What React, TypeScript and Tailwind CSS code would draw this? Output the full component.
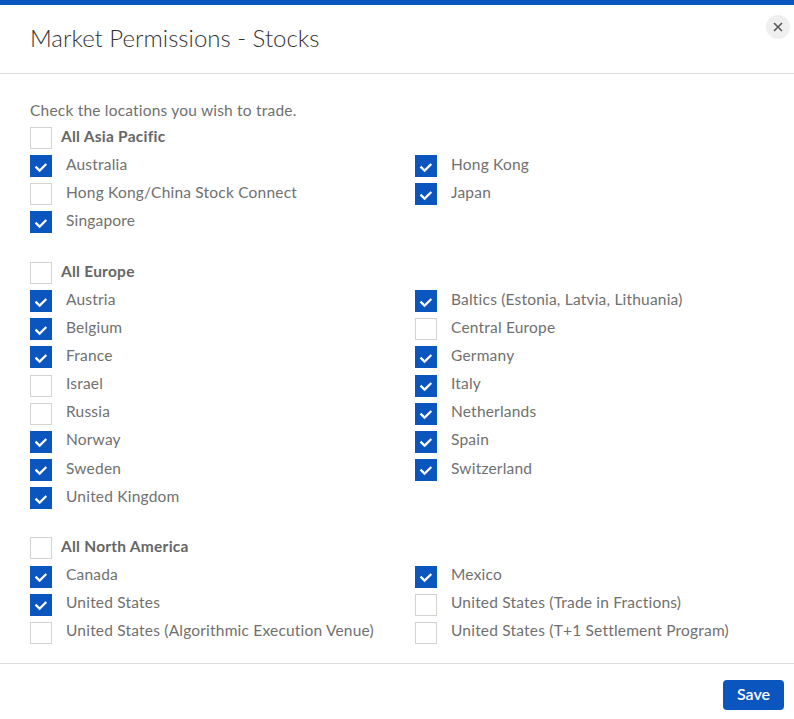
import React from "react";

type Item = [string, boolean];

function Box({ on }: { on: boolean }) {
  return on ? (
    <span className="flex h-[22px] w-[22px] shrink-0 items-center justify-center bg-[#0b55bf]">
      <svg width="14" height="11" viewBox="0 0 14 11" fill="none" className="mt-[2px]">
        <path d="M1.5 4.6 L5.6 8.6 L12.3 2" stroke="#fff" strokeWidth="2.2" />
      </svg>
    </span>
  ) : (
    <span className="h-[22px] w-[22px] shrink-0 border border-[#d6d3ce] bg-white" />
  );
}

function Row({ item }: { item: Item }) {
  return (
    <div className="flex h-[28.125px] items-center">
      <Box on={item[1]} />
      <span className="ml-[14px] pb-[3.5px] text-[15.5px] tracking-[0.2px] text-[#707070]">{item[0]}</span>
    </div>
  );
}

function Group({ title, items, className }: { title: string; items: Item[]; className: string }) {
  return (
    <div className={className}>
      <div className="flex h-[28.125px] items-center">
        <Box on={false} />
        <span className="ml-[9px] pb-[3.5px] text-[15.5px] font-bold tracking-[0.25px] text-[#666666]">{title}</span>
      </div>
      <div className="grid grid-cols-[385px_1fr]">
        {items.map((it) => (
          <Row key={it[0]} item={it} />
        ))}
      </div>
    </div>
  );
}

const asia: Item[] = [
  ["Australia", true],
  ["Hong Kong", true],
  ["Hong Kong/China Stock Connect", false],
  ["Japan", true],
  ["Singapore", true],
];
const europe: Item[] = [
  ["Austria", true],
  ["Baltics (Estonia, Latvia, Lithuania)", true],
  ["Belgium", true],
  ["Central Europe", false],
  ["France", true],
  ["Germany", true],
  ["Israel", false],
  ["Italy", true],
  ["Russia", false],
  ["Netherlands", true],
  ["Norway", true],
  ["Spain", true],
  ["Sweden", true],
  ["Switzerland", true],
  ["United Kingdom", true],
];
const na: Item[] = [
  ["Canada", true],
  ["Mexico", true],
  ["United States", true],
  ["United States (Trade in Fractions)", false],
  ["United States (Algorithmic Execution Venue)", false],
  ["United States (T+1 Settlement Program)", false],
];

export default function App() {
  return (
    <div className="relative flex h-[719px] w-[794px] flex-col overflow-hidden bg-white font-['Lato','Liberation_Sans',sans-serif]">
      <div className="h-[5px] shrink-0 bg-[#0b55bf]" />
      <header className="flex h-[69px] shrink-0 items-center border-b border-[#dcdcdc] pb-[2px] pl-[30px]">
        <h1 className="text-[24px] font-light text-[#333333]">Market Permissions - Stocks</h1>
      </header>
      <button className="absolute right-[4px] top-[15px] flex h-6 w-6 items-center justify-center rounded-full bg-[#efefef]">
        <svg width="10" height="10" viewBox="0 0 10 10" fill="none">
          <path d="M1 1 L9 9 M9 1 L1 9" stroke="#555" strokeWidth="1.6" />
        </svg>
      </button>
      <main className="min-h-0 flex-1 px-[30px] pt-[26px]">
        <p className="mb-[3px] h-[21px] text-[15.5px] leading-[21px] tracking-[0.2px] text-[#707070]">
          Check the locations you wish to trade.
        </p>
        <Group title="All Asia Pacific" items={asia} className="mb-[22.5px]" />
        <Group title="All Europe" items={europe} className="mb-[22.25px]" />
        <Group title="All North America" items={na} className="mb-0" />
      </main>
      <footer className="flex h-[56px] shrink-0 items-start justify-end border-t border-[#dcdcdc] pr-[10px] pt-[16px]">
        <button className="h-[30px] w-[61px] rounded-[4px] bg-[#0b55bf] pb-[2px] text-[16px] font-semibold text-white">Save</button>
      </footer>
    </div>
  );
}
